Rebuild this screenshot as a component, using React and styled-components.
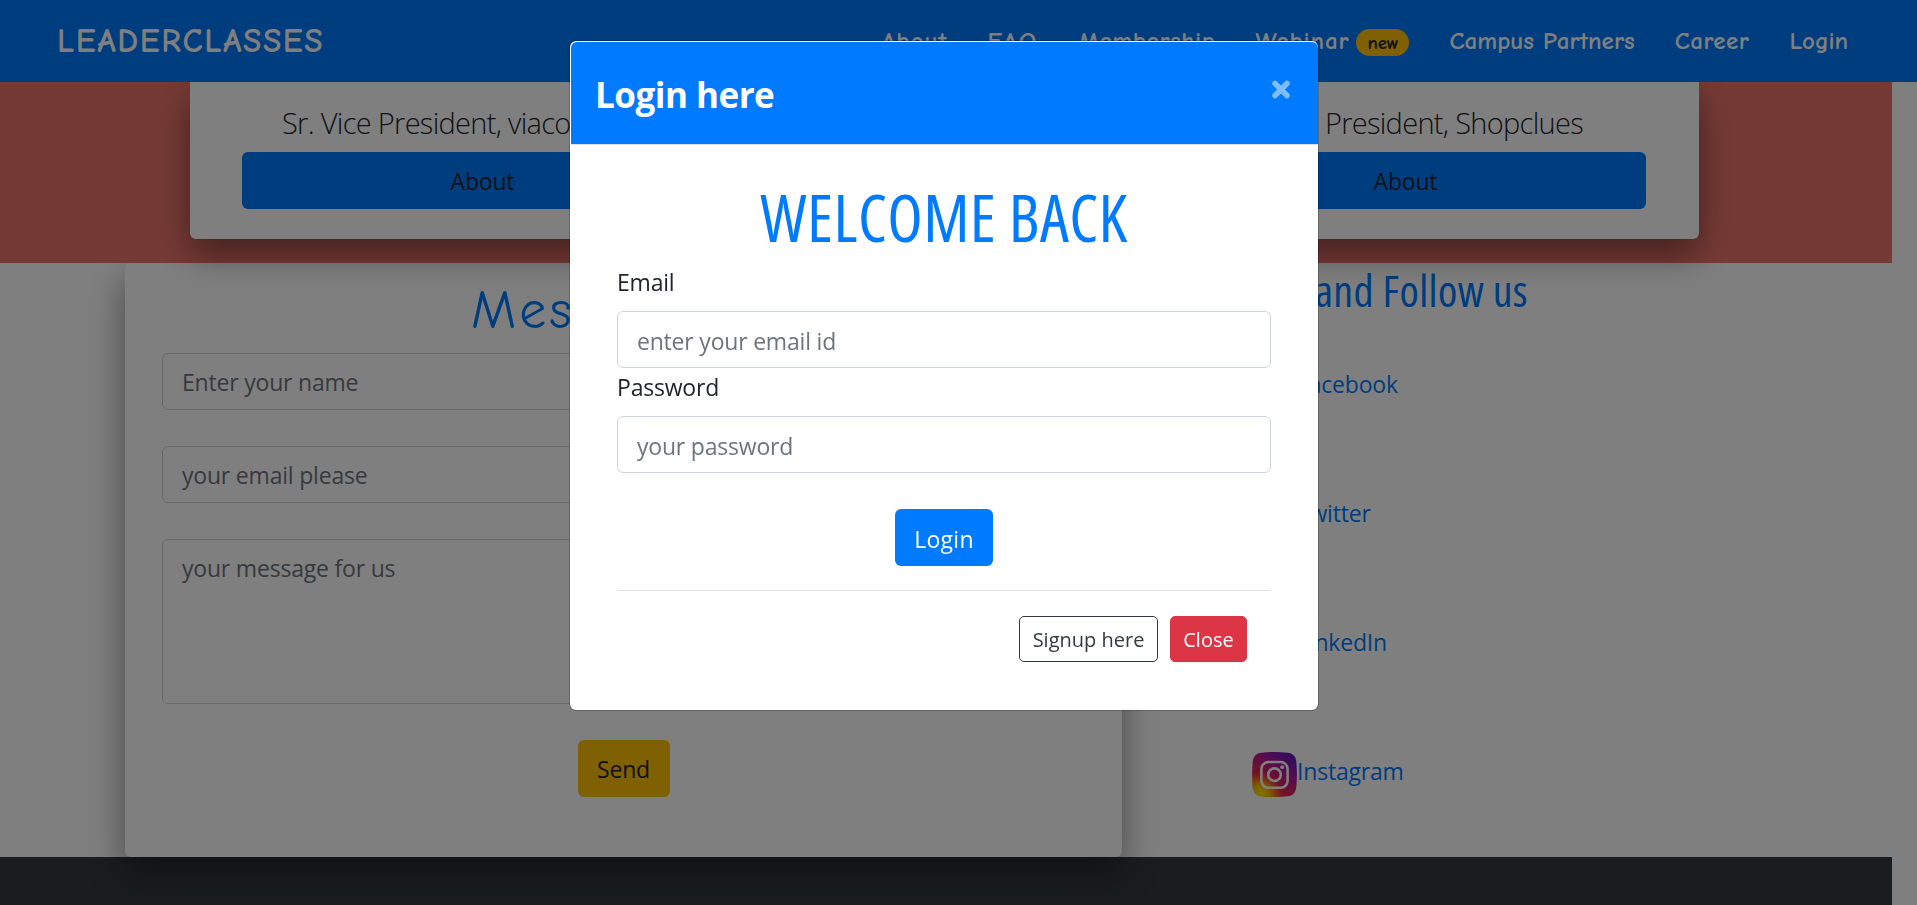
import React from 'react';
import styled, { createGlobalStyle } from 'styled-components';
import { FaFacebookSquare, FaTwitterSquare, FaLinkedin } from 'react-icons/fa';

const GlobalStyle = createGlobalStyle`
  *, *::before, *::after { box-sizing: border-box; }
  html, body { margin: 0; height: 100%; overflow: hidden; background: #fff; }
  body {
    font-family: 'Open Sans', sans-serif;
    font-size: 23px;
    letter-spacing: -0.2px;
    line-height: 36px;
    color: #212529;
  }
  h1, h2, h3, p { margin: 0; font-weight: 400; }
  input, textarea, button { font: inherit; letter-spacing: inherit; }
`;

const Page = styled.div`
  height: 905px;
  display: flex;
  flex-direction: column;
`;

const Navbar = styled.nav`
  position: relative;
  z-index: 3;
  flex: none;
  height: 82px;
  padding: 0 69px 0 57px;
  display: flex;
  justify-content: space-between;
  align-items: center;
  background: #007bff;
  color: #fff;
  font-family: 'Comic Neue', 'Open Sans', sans-serif;
`;

const Brand = styled.span`
  font-size: 33.5px;
  font-weight: 700;
  letter-spacing: 1.6px;
`;

const NavList = styled.div`
  display: flex;
  align-items: center;
  gap: 40px;
`;

const NavItem = styled.span`
  display: flex;
  align-items: center;
  gap: 7px;
  font-size: 25px;
  font-weight: 700;
  letter-spacing: ${(p) => p.$spacing || 0}px;
  white-space: nowrap;
`;

const Badge = styled.span`
  width: 53px;
  height: 27px;
  margin-top: 2px;
  padding-top: 2px;
  border-radius: 14px;
  background: #ffc107;
  color: #212529;
  font-size: 19px;
  line-height: 25px;
  letter-spacing: -0.2px;
  text-align: center;
`;

const Content = styled.main`
  width: 1892px;
  flex: 1;
  display: flex;
  flex-direction: column;
`;

const Speakers = styled.section`
  position: relative;
  z-index: 2;
  flex: none;
  height: 181px;
  padding: 0 193px 24px 190px;
  background: #ed756c;
`;

const SpeakerCard = styled.div`
  height: 157px;
  padding: 22px 53px 30px 52px;
  display: flex;
  justify-content: space-between;
  background: #fff;
  border-radius: 0 0 6px 6px;
  box-shadow: 0 15px 36px rgba(0, 0, 0, 0.44);
`;

const Speaker = styled.div`
  width: 481px;
  display: flex;
  flex-direction: column;
  gap: 8px;
`;

const SpeakerTitle = styled.p`
  height: 40px;
  padding: 0 ${(p) => p.$right || 0}px 0 ${(p) => p.$left || 0}px;
  font-size: 29px;
  font-weight: 300;
  letter-spacing: -0.7px;
  line-height: 38px;
  text-align: ${(p) => p.$align || 'left'};
  white-space: nowrap;
`;

const tones = {
  primary: ['#007bff', '#fff'],
  speaker: ['#007bff', '#212529'],
  warning: ['#ffc107', '#212529'],
};

const Button = styled.button`
  height: 57px;
  width: ${(p) => p.$width};
  padding: 1px 0 0;
  border: 0;
  border-radius: 6px;
  background: ${(p) => tones[p.$tone][0]};
  color: ${(p) => tones[p.$tone][1]};
  text-align: center;
`;

const ContactRow = styled.section`
  position: relative;
  z-index: 1;
  flex: none;
  height: 594px;
  padding-left: 125px;
  display: flex;
`;

const MessageCard = styled.form`
  width: 997px;
  height: 594px;
  padding: 23px 37px 0;
  display: flex;
  flex-direction: column;
  align-items: center;
  background: #fff;
  border-radius: 6px;
  box-shadow: 0 15px 36px rgba(0, 0, 0, 0.44);
`;

const MessageTitle = styled.h2`
  width: 305px;
  height: 50px;
  margin-bottom: 17px;
  color: #007bff;
  font-family: 'Comic Neue', 'Open Sans', sans-serif;
  font-size: 54px;
  line-height: 50px;
  letter-spacing: 3px;
  white-space: nowrap;
`;

const Input = styled.input`
  width: 100%;
  height: 57px;
  padding: 1px 19px 0;
  border: 1px solid #ced4da;
  border-radius: 6px;
  background: #fff;
  &::placeholder { color: #6c757d; opacity: 1; }
`;

const MessageInput = styled(Input)`
  margin-bottom: 36px;
`;

const LoginInput = styled(Input)`
  padding-top: 3px;
`;

const TextArea = styled.textarea`
  width: 100%;
  height: 165px;
  margin-bottom: 36px;
  padding: 10px 19px;
  border: 1px solid #ced4da;
  border-radius: 6px;
  resize: none;
  &::placeholder { color: #6c757d; opacity: 1; }
`;

const Social = styled.aside`
  flex: 1;
  padding-left: 130px;
`;

const SocialTitle = styled.h2`
  width: 276px;
  height: 59px;
  display: flex;
  justify-content: flex-end;
  color: #007bff;
  font-size: 44px;
  font-stretch: 75%;
  line-height: 55px;
  letter-spacing: 0.35px;
  white-space: nowrap;
`;

const SocialList = styled.div`
  padding-top: 43px;
  display: flex;
  flex-direction: column;
  gap: 84px;
`;

const SocialLink = styled.a`
  height: 45px;
  display: flex;
  align-items: flex-start;
  color: #007bff;
  line-height: 39px;
  svg { flex: none; }
`;

const Footer = styled.footer`
  flex: 1;
  background: #343a40;
`;

const Backdrop = styled.div`
  position: fixed;
  inset: 0;
  z-index: 10;
  padding: 40px 29px 0 0;
  display: flex;
  justify-content: center;
  align-items: flex-start;
  background: rgba(0, 0, 0, 0.5);
`;

const Dialog = styled.div`
  width: 750px;
  height: 671px;
  padding: 1px 0 0 1px;
  display: flex;
  flex-direction: column;
  border: 1px solid rgba(0, 0, 0, 0.2);
  border-radius: 7px;
  background: #fff;
  background-clip: padding-box;
`;

const DialogHeader = styled.header`
  flex: none;
  height: 103px;
  padding: 0 28px 0 24px;
  display: flex;
  justify-content: space-between;
  background: #007bff;
  color: #fff;
  border-bottom: 1px solid #dee2e6;
  border-radius: 6px 6px 0 0;
`;

const DialogTitle = styled.h3`
  font-size: 35px;
  font-weight: 700;
  line-height: 105px;
  letter-spacing: -0.5px;
`;

const CloseIcon = styled.svg`
  margin-top: 38px;
  width: 18px;
  height: 19px;
`;

const DialogBody = styled.div`
  flex: 1;
  padding: 36px 47px 0 46px;
  display: flex;
  flex-direction: column;
  align-items: center;
`;

const Welcome = styled.h1`
  height: 81px;
  margin-bottom: 2px;
  color: #007bff;
  font-size: 65px;
  font-stretch: 75%;
  line-height: 73px;
  letter-spacing: 0.5px;
  white-space: nowrap;
`;

const Field = styled.label`
  width: 100%;
  height: 105px;
  display: flex;
  flex-direction: column;
  gap: 11px;
`;

const Divider = styled.hr`
  width: 100%;
  height: 1px;
  margin: 24px 0 25px;
  border: 0;
  background: #dee2e6;
`;

const LoginButton = styled(Button)`
  flex: none;
  margin-top: 35px;
  padding-top: 3px;
  letter-spacing: 0.3px;
`;

const DialogFooter = styled.footer`
  width: 100%;
  padding-right: 24px;
  display: flex;
  justify-content: flex-end;
  gap: 12px;
`;

const SmallButton = styled.button`
  width: ${(p) => p.$width}px;
  height: 46px;
  padding: 1px 0 0;
  border: 1px solid ${(p) => (p.$danger ? '#dc3545' : '#343a40')};
  border-radius: 5px;
  background: ${(p) => (p.$danger ? '#dc3545' : '#fff')};
  color: ${(p) => (p.$danger ? '#fff' : '#343a40')};
  font-size: 20px;
  font-weight: ${(p) => (p.$danger ? 500 : 400)};
  letter-spacing: 0;
`;

const InstagramIcon = () => (
  <svg width="45" height="45" viewBox="0 0 45 45">
    <defs>
      <linearGradient id="igBase" x1="0.1" y1="1" x2="0.8" y2="0">
        <stop offset="0" stopColor="#ff9a10" />
        <stop offset="0.35" stopColor="#e8244c" />
        <stop offset="0.65" stopColor="#b81898" />
        <stop offset="1" stopColor="#5a18b8" />
      </linearGradient>
      <radialGradient id="igGlow" cx="0.2" cy="0.92" r="0.46">
        <stop offset="0" stopColor="#ffe600" />
        <stop offset="0.4" stopColor="#ffd000" stopOpacity="0.85" />
        <stop offset="1" stopColor="#ff8000" stopOpacity="0" />
      </radialGradient>
    </defs>
    <path d="M9 .8Q22.500-.8 36 .8 43 1.500 44.200 9 45.600 22.500 44.200 36 43 43.500 36 44.200 22.500 45.800 9 44.200 2 43.500.8 36-.6 22.500.8 9 2 1.500 9 .8Z" fill="url(#igBase)" />
    <path d="M9 .8Q22.500-.8 36 .8 43 1.500 44.200 9 45.600 22.500 44.200 36 43 43.500 36 44.200 22.500 45.800 9 44.200 2 43.500.8 36-.6 22.500.8 9 2 1.500 9 .8Z" fill="url(#igGlow)" />
    <g fill="none" stroke="#fff" strokeWidth="2.600">
      <rect x="9.400" y="10" width="26.200" height="25.800" rx="7" />
      <circle cx="22.500" cy="22.700" r="6.300" />
    </g>
    <circle cx="30.200" cy="15.200" r="1.900" fill="#fff" />
  </svg>
);

export default function App() {
  return (
    <>
      <GlobalStyle />
      <Page>
        <Navbar>
          <Brand>LEADERCLASSES</Brand>
          <NavList>
            <NavItem $spacing={1}>About</NavItem>
            <NavItem $spacing={2.5}>FAQ</NavItem>
            <NavItem $spacing={0.6}>Membership</NavItem>
            <NavItem $spacing={0.9}>
              Webinar <Badge>new</Badge>
            </NavItem>
            <NavItem $spacing={0.05}>Campus Partners</NavItem>
            <NavItem $spacing={0.5}>Career</NavItem>
            <NavItem $spacing={-0.1}>Login</NavItem>
          </NavList>
        </Navbar>
        <Content>
          <Speakers>
            <SpeakerCard>
              <Speaker>
                <SpeakerTitle $left={40}>Sr. Vice President, viacom18</SpeakerTitle>
                <Button $tone="speaker" $width="100%">About</Button>
              </Speaker>
              <Speaker>
                <SpeakerTitle $align="right" $right={63}>Vice President, Shopclues</SpeakerTitle>
                <Button $tone="speaker" $width="100%">About</Button>
              </Speaker>
            </SpeakerCard>
          </Speakers>
          <ContactRow>
            <MessageCard>
              <MessageTitle>Message us</MessageTitle>
              <MessageInput placeholder="Enter your name" />
              <MessageInput placeholder="your email please" />
              <TextArea placeholder="your message for us" />
              <Button type="button" $tone="warning" $width="92px">Send</Button>
            </MessageCard>
            <Social>
              <SocialTitle>Like and Follow us</SocialTitle>
              <SocialList>
                <SocialLink><FaFacebookSquare size={45} />Facebook</SocialLink>
                <SocialLink><FaTwitterSquare size={45} />Twitter</SocialLink>
                <SocialLink><FaLinkedin size={45} />LinkedIn</SocialLink>
                <SocialLink><InstagramIcon />Instagram</SocialLink>
              </SocialList>
            </Social>
          </ContactRow>
          <Footer />
        </Content>
      </Page>
      <Backdrop>
        <Dialog role="dialog">
          <DialogHeader>
            <DialogTitle>Login here</DialogTitle>
            <CloseIcon viewBox="0 0 18 19">
              <path d="M3 3.500 15 15.500M15 3.500 3 15.500" stroke="#80bdff" strokeWidth="5.500" strokeLinecap="round" />
            </CloseIcon>
          </DialogHeader>
          <DialogBody>
            <Welcome>WELCOME BACK</Welcome>
            <Field>
              Email
              <LoginInput placeholder="enter your email id" />
            </Field>
            <Field>
              Password
              <LoginInput type="password" placeholder="your password" />
            </Field>
            <LoginButton $tone="primary" $width="98px">Login</LoginButton>
            <Divider />
            <DialogFooter>
              <SmallButton $width={139}>Signup here</SmallButton>
              <SmallButton $danger $width={77}>Close</SmallButton>
            </DialogFooter>
          </DialogBody>
        </Dialog>
      </Backdrop>
    </>
  );
}
